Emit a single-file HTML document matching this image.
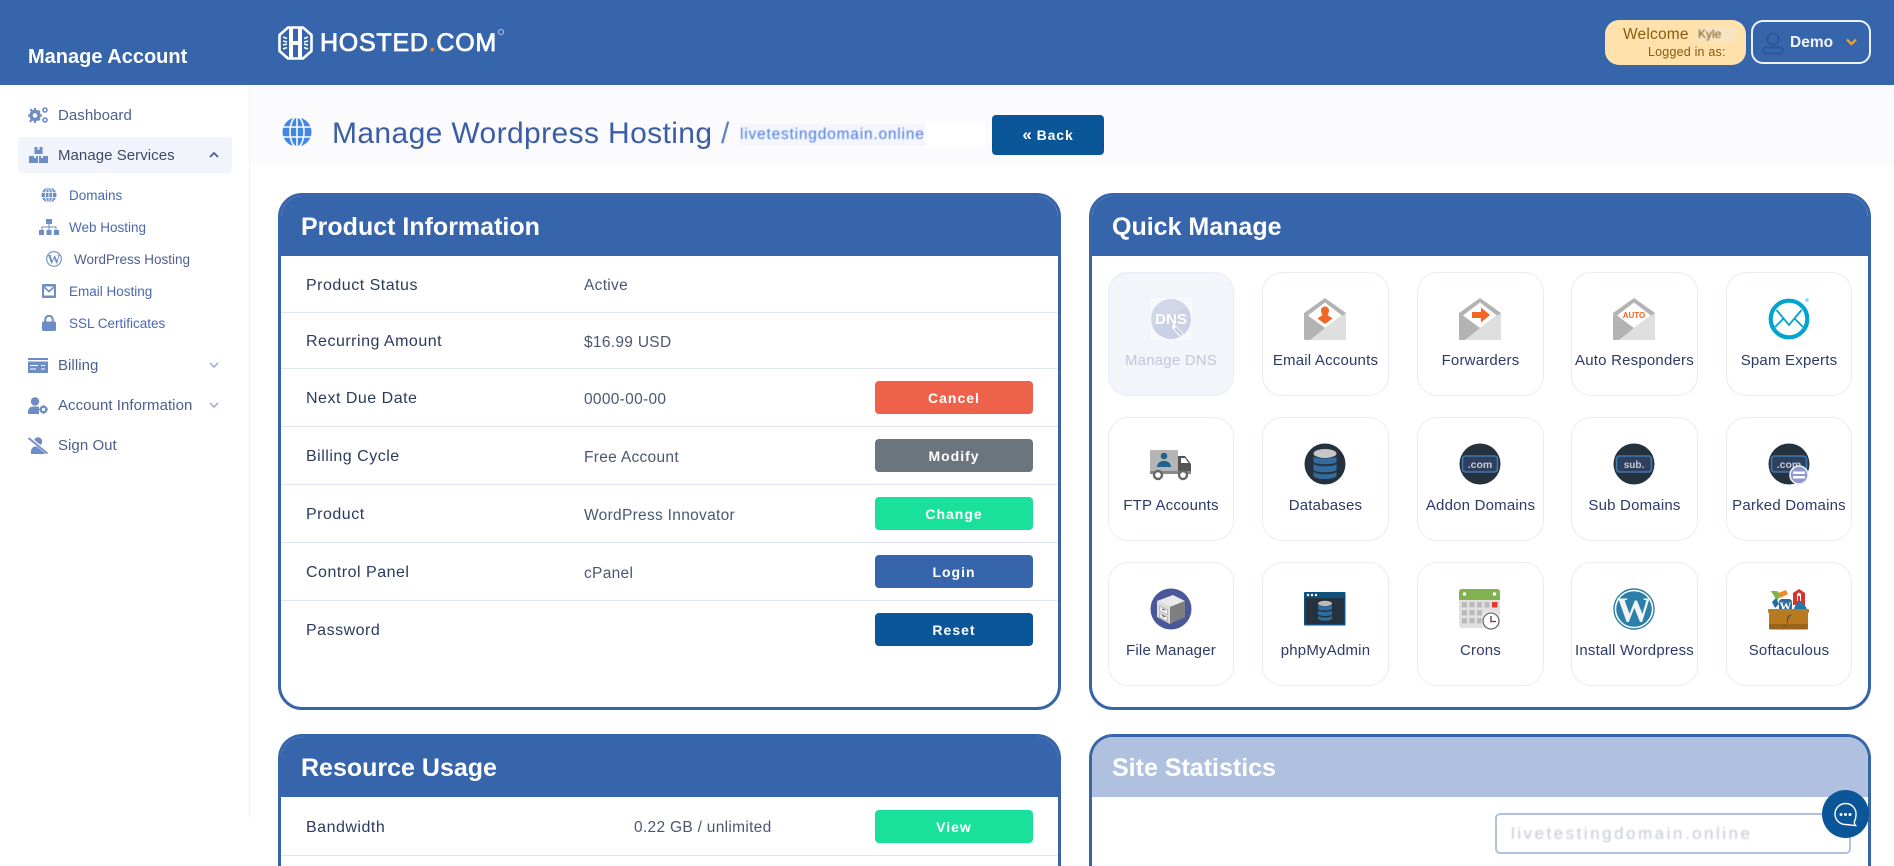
<!DOCTYPE html>
<html lang="en"><head><meta charset="utf-8"><title>Manage Wordpress Hosting</title>
<style>
*{box-sizing:border-box}
html,body{margin:0;padding:0;width:1894px;height:866px;overflow:hidden;background:#fff;font-family:"Liberation Sans",sans-serif}
#page{position:relative;width:1894px;height:866px;overflow:hidden;background:#fff}
.a{position:absolute;white-space:nowrap}
.top{position:absolute;left:0;top:0;width:1894px;height:85px;background:#3765ab}
.side-line{position:absolute;left:249px;top:85px;width:1px;height:732px;background:#f0f1f5}
.title-bar{position:absolute;left:250px;top:85px;width:1644px;height:80px;background:#fbfbfd}
.nav{position:absolute;height:20px;line-height:20px;font-size:15px;color:#4c5f8e;white-space:nowrap;letter-spacing:.05px;margin-top:1px}
.sub{position:absolute;height:20px;line-height:20px;font-size:13.5px;color:#4a68b0;white-space:nowrap;margin-top:1px}
.ni{position:absolute}
.card{position:absolute;border:3px solid #3765ab;border-radius:24px;background:#fff;overflow:hidden}
.card.cut{height:132px;border-bottom:0;border-radius:24px 24px 0 0}
.head{position:absolute;left:-3px;right:-3px;top:-3px;height:63px;background:#3765ab;color:#fff;font-weight:700;font-size:25px;line-height:68px;padding-left:23px}
.sep{position:absolute;left:0;right:0;height:1px;background:#dfe6f2}
.lb{position:absolute;left:25px;height:20px;line-height:20px;font-size:16px;color:#2b3a5e;white-space:nowrap;letter-spacing:.5px}
.val{position:absolute;left:303px;height:20px;line-height:20px;font-size:15.5px;color:#4b5772;white-space:nowrap;letter-spacing:.3px}
.btn{position:absolute;left:594px;width:158px;height:33px;border-radius:4px;color:#fff;text-align:center;font-weight:700;font-size:14px;line-height:34px;letter-spacing:1px}
.tile{position:absolute;width:126px;height:124px;border:1px solid #e8ecf6;border-radius:20px;background:#fff}
.tile svg{position:absolute;left:41px;top:25px;width:42px;height:42px;overflow:visible}
.tile span{position:absolute;left:-4px;right:-4px;top:78px;height:20px;line-height:20px;text-align:center;font-size:15px;color:#2b3a68;white-space:nowrap;letter-spacing:.2px}
</style></head><body>
<div id="page">

<div class="top"></div>
<div class="side-line"></div>
<div class="title-bar"></div>

<div class="a" style="left:28px;top:44px;height:26px;line-height:26px;font-size:20px;font-weight:700;color:#fff">Manage Account</div>

<svg class="a" style="left:278px;top:26px" width="35" height="34" viewBox="0 0 35 34">
<path d="M10 1.5H25L33.5 9V25L25 32.5H10L1.5 25V9Z" fill="none" stroke="#fff" stroke-width="2.6" stroke-linejoin="round"/>
<path d="M11 1.5H15V15H20V1.5H24V32.5H20V19H15V32.5H11Z" fill="#fff"/>
<path d="M5 11l4 1.5M5 15l4 1M5 19l4-1M5 23l4-1.5M30 11l-4 1.5M30 15l-4 1M30 19l-4-1M30 23l-4-1.5" stroke="#fff" stroke-width="1.5"/>
</svg>
<div class="a" style="left:320px;top:28px;height:30px;line-height:30px;font-size:25px;font-weight:400;color:#fff;letter-spacing:.75px;-webkit-text-stroke:.8px #fff">HOSTED<span style="color:#f58220;-webkit-text-stroke:.8px #f58220">.</span>COM</div>
<div class="a" style="left:498px;top:29px;width:6px;height:6px;border:1px solid #b8c8e2;border-radius:50%"></div>

<!-- Top right -->
<div class="a" style="left:1605px;top:20px;width:141px;height:45px;background:#ffe2ab;border-radius:14px"></div>
<div class="a" style="left:1623px;top:26px;height:18px;line-height:18px;font-size:15.5px;color:#8a5a0e;letter-spacing:.2px">Welcome</div>
<div class="a" style="left:1698px;top:27px;width:38px;height:15px;line-height:15px;font-size:12px;color:#7a5a20;background:#f6e4c4;filter:blur(.6px);overflow:hidden">Kyle</div>
<div class="a" style="left:1648px;top:44px;height:17px;line-height:17px;font-size:12.5px;color:#8a5a0e;letter-spacing:.2px">Logged in as:</div>
<div class="a" style="left:1751px;top:20px;width:120px;height:44px;border:2px solid #eef2fa;border-radius:12px"></div>
<svg class="a" style="left:1761px;top:31px" width="24" height="24" viewBox="0 0 24 24" fill="none" stroke="#2a5596" stroke-width="1.7"><circle cx="12" cy="8" r="5.7"/><rect x="2" y="16.5" width="20" height="6" rx="3"/></svg>
<div class="a" style="left:1790px;top:33px;height:20px;line-height:20px;font-size:15.5px;font-weight:700;color:#f1f4fb">Demo</div>
<svg class="a" style="left:1846px;top:38px" width="11" height="8" viewBox="0 0 11 8"><path d="M1 1.5L5.5 6L10 1.5" fill="none" stroke="#f5a623" stroke-width="2.2"/></svg>

<!-- Sidebar -->
<svg class="ni" style="left:28px;top:107px" width="20" height="16" viewBox="0 0 20 16" fill="#6d8dc4"><circle cx="7" cy="8.5" r="4" fill="none" stroke="#6d8dc4" stroke-width="3.4"/><path d="M6 1h2v3H6zM6 13h2v3H6zM0 7.5h3v2H0zM11 7.5h3v2h-3zM1.5 3l1.5-1.5 2 2-1.5 1.5zM9 12l1.5-1.5 2 2L11 14zM11 3l1.5 1.500-2 2L9 5zM3 12l1.5 1.5-2 2L1 14z"/><circle cx="17" cy="3" r="2" fill="none" stroke="#6d8dc4" stroke-width="1.6"/><circle cx="17" cy="13" r="2" fill="none" stroke="#6d8dc4" stroke-width="1.6"/></svg>
<div class="nav" style="left:58px;top:105px">Dashboard</div>

<div class="a" style="left:18px;top:137px;width:214px;height:36px;background:#f1f4fb;border-radius:3px"></div>
<svg class="ni" style="left:29px;top:147px" width="19" height="16" viewBox="0 0 19 16" fill="#6d8dc4"><path d="M5.5 0h3v3h2V0h3v7h-8z"/><path d="M0 9h5v2h2V9h2v7H0zM10 9h2v2h2V9h5v7h-9z"/></svg>
<div class="nav" style="left:58px;top:145px;color:#3c4a66">Manage Services</div>
<svg class="ni" style="left:209px;top:151px" width="10" height="8" viewBox="0 0 10 8"><path d="M1 6L5 2L9 6" fill="none" stroke="#4c5f8e" stroke-width="1.8"/></svg>

<svg class="ni" style="left:41px;top:187px" width="16" height="16" viewBox="0 0 16 16" fill="none"><circle cx="8" cy="8" r="7.5" fill="#6d8dc4"/><path d="M0 5.3h16M0 10.7h16M8 0v16" stroke="#fff" stroke-width=".9"/><ellipse cx="8" cy="8" rx="3.7" ry="7.6" stroke="#fff" stroke-width=".9"/></svg>
<div class="sub" style="left:69px;top:185px">Domains</div>

<svg class="ni" style="left:39px;top:219px" width="20" height="16" viewBox="0 0 20 16" fill="#6d8dc4"><rect x="7" y="0" width="6" height="5"/><rect x="0" y="11" width="5" height="5"/><rect x="7.5" y="11" width="5" height="5"/><rect x="15" y="11" width="5" height="5"/><path d="M9.5 5h1v2.5h7V11h-1V8.5h-6V11h-1V8.500h-6V11h-1V7.5h7z"/></svg>
<div class="sub" style="left:69px;top:217px">Web Hosting</div>

<svg class="ni" style="left:46px;top:251px" width="16" height="16" viewBox="0 0 16 16"><circle cx="8" cy="8" r="7.3" fill="none" stroke="#6d8dc4" stroke-width="1.1"/><text x="8" y="12.5" text-anchor="middle" font-family="'Liberation Serif',serif" font-weight="700" font-size="13" fill="#6d8dc4">W</text></svg>
<div class="sub" style="left:74px;top:249px;color:#4c5f8e">WordPress Hosting</div>

<svg class="ni" style="left:42px;top:284px" width="14" height="14" viewBox="0 0 14 14"><rect width="14" height="14" rx="1" fill="#6d8dc4"/><path d="M2 2.5H12V11.5H2Z" fill="#fff"/><path d="M2 3l5 4.5L12 3" fill="none" stroke="#6d8dc4" stroke-width="1.6"/></svg>
<div class="sub" style="left:69px;top:281px">Email Hosting</div>

<svg class="ni" style="left:42px;top:315px" width="14" height="16" viewBox="0 0 14 16"><path d="M3.3 7V4.5a3.7 3.7 0 0 1 7.4 0V7" fill="none" stroke="#6d8dc4" stroke-width="2"/><rect y="6.5" width="14" height="9.5" rx="1.5" fill="#6d8dc4"/></svg>
<div class="sub" style="left:69px;top:313px">SSL Certificates</div>

<svg class="ni" style="left:28px;top:358px" width="20" height="15" viewBox="0 0 20 15" fill="#6d8dc4"><rect width="20" height="2"/><path d="M0 3.5H20V15H0Z"/><path d="M2 7h8v1H2zM13 7h4v1h-4zM2 10.5h6v1H2zM13 10.5h4v1h-4z" fill="#fff"/></svg>
<div class="nav" style="left:58px;top:355px">Billing</div>
<svg class="ni" style="left:209px;top:361px" width="10" height="8" viewBox="0 0 10 8"><path d="M1 2L5 6L9 2" fill="none" stroke="#a9b4cc" stroke-width="1.8"/></svg>

<svg class="ni" style="left:28px;top:397px" width="20" height="17" viewBox="0 0 20 17" fill="#6d8dc4"><circle cx="7" cy="4.5" r="4.2"/><path d="M0 17v-2.5C0 11.5 2.5 9.5 5 9.5h4c1 0 1.5.3 2 .5v7z"/><circle cx="15.5" cy="12.5" r="2.8" fill="none" stroke="#6d8dc4" stroke-width="2.4"/><path d="M15 8h1v2h-1zM15 15h1v2h-1zM11 12h2v1h-2zM18 12h2v1h-2z"/></svg>
<div class="nav" style="left:58px;top:395px">Account Information</div>
<svg class="ni" style="left:209px;top:401px" width="10" height="8" viewBox="0 0 10 8"><path d="M1 2L5 6L9 2" fill="none" stroke="#a9b4cc" stroke-width="1.8"/></svg>

<svg class="ni" style="left:28px;top:437px" width="20" height="17" viewBox="0 0 20 17"><circle cx="10" cy="4.5" r="4.2" fill="#6d8dc4"/><path d="M3 17v-2.5C3 11.5 5 9.5 7.5 9.5h5c2.5 0 4.5 2 4.5 5V17z" fill="#6d8dc4"/><path d="M0.5 0.5L19 15.5" stroke="#fff" stroke-width="3.5"/><path d="M0.5 1L19.5 16.5" stroke="#6d8dc4" stroke-width="1.8"/></svg>
<div class="nav" style="left:58px;top:435px">Sign Out</div>

<!-- Title -->
<svg class="a" style="left:282px;top:117px" width="30" height="30" viewBox="0 0 30 30"><circle cx="15" cy="15" r="14.5" fill="#4287e6"/><g fill="none" stroke="#fbfbfd" stroke-width="1.6"><ellipse cx="15" cy="15" rx="7" ry="15"/><path d="M0 10h30M0 20h30M15 0v30"/></g></svg>
<div class="a" style="left:332px;top:114px;height:40px;line-height:40px;font-size:30px;color:#3b5da6;letter-spacing:.38px">Manage Wordpress Hosting</div>
<div class="a" style="left:721px;top:114px;height:40px;line-height:40px;font-size:30px;color:#5c82c8">/</div>
<div class="a" style="left:925px;top:123px;width:60px;height:24px;background:#fff"></div>
<div class="a" style="left:740px;top:124px;height:22px;line-height:22px;font-size:15.5px;color:#4e7ddc;letter-spacing:.8px;filter:blur(.6px);background:#f4f6fe">livetestingdomain.online</div>
<div class="a" style="left:992px;top:115px;width:112px;height:40px;background:#0a5699;border-radius:4px;color:#fff;text-align:center;font-weight:700;font-size:14px;line-height:40px;letter-spacing:.9px"><span style="font-size:17px;letter-spacing:0">«</span> Back</div>

<!-- Product Information -->
<div class="card" style="left:278px;top:193px;width:783px;height:517px">
<div class="head">Product Information</div>
<div class="lb" style="top:80px">Product Status</div><div class="val" style="top:80px">Active</div>
<div class="sep" style="top:116px"></div>
<div class="lb" style="top:136px">Recurring Amount</div><div class="val" style="top:137px">$16.99 USD</div>
<div class="sep" style="top:172px"></div>
<div class="lb" style="top:193px">Next Due Date</div><div class="val" style="top:194px">0000-00-00</div>
<div class="btn" style="top:185px;background:#ee614b">Cancel</div>
<div class="sep" style="top:230px"></div>
<div class="lb" style="top:251px">Billing Cycle</div><div class="val" style="top:252px">Free Account</div>
<div class="btn" style="top:243px;background:#6c757d">Modify</div>
<div class="sep" style="top:288px"></div>
<div class="lb" style="top:309px">Product</div><div class="val" style="top:310px">WordPress Innovator</div>
<div class="btn" style="top:301px;background:#19e19c">Change</div>
<div class="sep" style="top:346px"></div>
<div class="lb" style="top:367px">Control Panel</div><div class="val" style="top:368px">cPanel</div>
<div class="btn" style="top:359px;background:#3765ab">Login</div>
<div class="sep" style="top:404px"></div>
<div class="lb" style="top:425px">Password</div>
<div class="btn" style="top:417px;background:#0a5699">Reset</div>
</div>

<!-- Resource usage -->
<div class="card cut" style="left:278px;top:734px;width:783px">
<div class="head">Resource Usage</div>
<div class="lb" style="top:81px">Bandwidth</div>
<div class="val" style="top:81px;left:353px">0.22 GB / unlimited</div>
<div class="btn" style="top:73px;background:#19e19c">View</div>
<div class="sep" style="top:118px"></div>
</div>

<!-- Quick Manage -->
<div class="card" style="left:1089px;top:193px;width:782px;height:517px">
<div class="head">Quick Manage</div>
</div>

<!-- Row 1 -->
<div class="tile" style="left:1108px;top:272px;background:#f4f5fa">
<svg viewBox="0 0 42 42"><rect width="42" height="42" fill="#f8f9fc"/><circle cx="21" cy="21" r="20" fill="#d1d7e8"/><path d="M21 41A20 20 0 0 1 3 29L37 9A20 20 0 0 1 41 21 20 20 0 0 1 21 41" fill="#c4cbdf" opacity=".5"/><text x="21" y="26" text-anchor="middle" font-family="'Liberation Sans',sans-serif" font-weight="700" font-size="15" fill="#fff">DNS</text><path d="M23 25l11 11-3 4-9-10z" fill="#fff"/><path d="M26 29l7 7-2 2-7-7z" fill="#c4cbe6"/></svg>
<span style="color:#c0c7d8">Manage DNS</span></div>

<div class="tile" style="left:1262px;top:272px;width:127px">
<svg viewBox="0 0 42 42"><path d="M0 15L21 0 42 15V41a1 1 0 0 1-1 1H1a1 1 0 0 1-1-1Z" fill="#b3b3b3"/><path d="M21 4.5L38 17.5 21 30 4 17.5Z" fill="#fff"/><path d="M42 15V41a1 1 0 0 1-1 1H6L21 30Z" fill="#dfdfdf"/><path d="M21 8.5a4 4 0 0 1 4 4c0 2-1 3.5-1.5 4.5l5 3.5-7.5 5.5-7.5-5.5 5-3.5c-.5-1-1.5-2.5-1.5-4.5a4 4 0 0 1 4-4z" fill="#f26522"/></svg>
<span>Email Accounts</span></div>

<div class="tile" style="left:1417px;top:272px;width:127px">
<svg viewBox="0 0 42 42"><path d="M0 15L21 0 42 15V41a1 1 0 0 1-1 1H1a1 1 0 0 1-1-1Z" fill="#b3b3b3"/><path d="M21 4.5L38 17.5 21 30 4 17.5Z" fill="#fff"/><path d="M42 15V41a1 1 0 0 1-1 1H6L21 30Z" fill="#dfdfdf"/><path d="M13 14H22V9.5L31 17 22 24.5V20H13Z" fill="#f26522"/></svg>
<span>Forwarders</span></div>

<div class="tile" style="left:1571px;top:272px;width:127px">
<svg viewBox="0 0 42 42"><path d="M0 15L21 0 42 15V41a1 1 0 0 1-1 1H1a1 1 0 0 1-1-1Z" fill="#b3b3b3"/><path d="M21 4.5L38 17.5 21 30 4 17.5Z" fill="#fff"/><path d="M42 15V41a1 1 0 0 1-1 1H6L21 30Z" fill="#dfdfdf"/><text x="21" y="20" text-anchor="middle" font-family="'Liberation Sans',sans-serif" font-weight="700" font-size="8" fill="#f26522">AUTO</text></svg>
<span>Auto Responders</span></div>

<div class="tile" style="left:1726px;top:272px">
<svg viewBox="0 0 42 42"><circle cx="21" cy="21" r="18.3" fill="#fff" stroke="#00a4cf" stroke-width="4.2"/><path d="M8.5 12L21 27 33.5 12" fill="none" stroke="#00a4cf" stroke-width="1.8"/><path d="M7 29l8.5-8.5M35 29l-8.5-8.5" stroke="#00a4cf" stroke-width="1.8"/><circle cx="39" cy="2" r="1.8" fill="#8ed4ea"/></svg>
<span>Spam Experts</span></div>

<!-- Row 2 -->
<div class="tile" style="left:1108px;top:417px">
<svg viewBox="0 0 42 42"><rect x="0" y="7" width="28" height="22" rx="1" fill="#b5b5b5"/><circle cx="14" cy="13" r="3.3" fill="#21628f"/><path d="M7 24c0-4 3-5 5-6h4c2 1 5 2 5 6z" fill="#21628f"/><path d="M28 13h7l6 8v9H28z" fill="#555"/><path d="M31 15h4l3.5 5H31z" fill="#fff"/><rect x="0" y="28" width="41" height="3" fill="#888"/><circle cx="8" cy="32" r="4" fill="#fff" stroke="#666" stroke-width="2.4"/><circle cx="33" cy="32" r="4" fill="#fff" stroke="#666" stroke-width="2.4"/></svg>
<span>FTP Accounts</span></div>

<div class="tile" style="left:1262px;top:417px;width:127px">
<svg viewBox="0 0 42 42"><circle cx="21" cy="21" r="20.5" fill="#25323e"/><ellipse cx="21" cy="10.5" rx="11.5" ry="4.5" fill="#c7c7c7"/><path d="M9.5 13.5c2 2.5 21 2.5 23 0V19c-2 3-21 3-23 0z" fill="#336b9f"/><path d="M9.5 21c3 3 20 3 23 0v6c-3 3-20 3-23 0z" fill="#336b9f"/><path d="M9.5 29c3 3 20 3 23 0v4c-3 4-20 4-23 0z" fill="#336b9f"/></svg>
<span>Databases</span></div>

<div class="tile" style="left:1417px;top:417px;width:127px">
<svg viewBox="0 0 42 42"><circle cx="21" cy="21" r="20.5" fill="#25323e"/><rect x="3.5" y="13" width="35" height="16" rx="3" fill="#2f405e" stroke="#3f78ac" stroke-width="1.6"/><text x="21" y="25" text-anchor="middle" font-family="'Liberation Sans',sans-serif" font-weight="700" font-size="10.5" fill="#c6ccd4">.com</text></svg>
<span>Addon Domains</span></div>

<div class="tile" style="left:1571px;top:417px;width:127px">
<svg viewBox="0 0 42 42"><circle cx="21" cy="21" r="20.5" fill="#25323e"/><rect x="3.5" y="13" width="35" height="16" rx="3" fill="#2f405e" stroke="#3f78ac" stroke-width="1.6"/><text x="21" y="25" text-anchor="middle" font-family="'Liberation Sans',sans-serif" font-weight="700" font-size="10" fill="#c6ccd4">sub.</text></svg>
<span>Sub Domains</span></div>

<div class="tile" style="left:1726px;top:417px">
<svg viewBox="0 0 42 42"><circle cx="21" cy="21" r="20.5" fill="#25323e"/><rect x="3.5" y="13" width="35" height="16" rx="3" fill="#2f405e" stroke="#3f78ac" stroke-width="1.6"/><text x="21" y="25" text-anchor="middle" font-family="'Liberation Sans',sans-serif" font-weight="700" font-size="10.5" fill="#c6ccd4">.com</text><circle cx="31" cy="32" r="9" fill="#8f98cc" stroke="#eef0fa" stroke-width="1.6"/><rect x="25" y="28.5" width="12" height="2.5" fill="#fff"/><rect x="25" y="33" width="12" height="2.5" fill="#fff"/></svg>
<span>Parked Domains</span></div>

<!-- Row 3 -->
<div class="tile" style="left:1108px;top:562px">
<svg viewBox="0 0 42 42"><circle cx="21" cy="21" r="20.5" fill="#4a5899"/><path d="M7 13L23 7 35 13 20 19Z" fill="#eaeaea"/><path d="M7 13L20 19V36L7 29Z" fill="#ddd"/><path d="M20 19L35 13V29L20 36Z" fill="#7f7f7f"/><path d="M9.5 18l8 3.7v5L9.5 23zM9.5 25.5l8 3.7v4l-8-3.7z" fill="#f2f2f2" stroke="#999" stroke-width=".6"/><path d="M12 21l3 1.3M12 27.5l3 1.3" stroke="#555" stroke-width="1"/></svg>
<span>File Manager</span></div>

<div class="tile" style="left:1262px;top:562px;width:127px">
<svg viewBox="0 0 42 42"><rect x="0" y="4" width="41.5" height="33.5" rx="1" fill="#10507c"/><rect x="1.5" y="10" width="38.5" height="26" fill="#25323e"/><circle cx="4" cy="7" r="1.2" fill="#fff"/><circle cx="8" cy="7" r="1.2" fill="#fff"/><circle cx="12" cy="7" r="1.2" fill="#fff"/><ellipse cx="21" cy="15.5" rx="7" ry="2.7" fill="#bbb"/><path d="M14 17c2 2 12 2 14 0v4c-2 2-12 2-14 0z" fill="#2d6ea1"/><path d="M14 22.5c2 2 12 2 14 0v4c-2 2-12 2-14 0z" fill="#2d6ea1"/><path d="M14 28c2 2 12 2 14 0v2.5c-2 3-12 3-14 0z" fill="#2d6ea1"/></svg>
<span>phpMyAdmin</span></div>

<div class="tile" style="left:1417px;top:562px;width:127px">
<svg viewBox="0 0 42 42"><rect x="0" y="1" width="41" height="39" rx="3" fill="#e0e0e0"/><path d="M0 12V4a3 3 0 0 1 3-3h35a3 3 0 0 1 3 3v8z" fill="#82b151"/><circle cx="5.5" cy="6" r="1.7" fill="#fff"/><circle cx="35.5" cy="6" r="1.7" fill="#fff"/><g fill="#bababa"><rect x="3" y="14" width="5" height="5.5"/><rect x="10.5" y="14" width="5" height="5.5"/><rect x="18" y="14" width="5" height="5.5"/><rect x="25.5" y="14" width="5" height="5.5"/><rect x="3" y="22" width="5" height="5.5"/><rect x="10.5" y="22" width="5" height="5.5"/><rect x="18" y="22" width="5" height="5.5"/><rect x="3" y="30" width="5" height="5.5"/><rect x="10.5" y="30" width="5" height="5.5"/><rect x="18" y="30" width="5" height="5.5"/></g><rect x="33" y="14" width="5.5" height="5.5" fill="#e03a2e"/><circle cx="32" cy="33" r="9.5" fill="#fff"/><circle cx="32" cy="33" r="8" fill="#fff" stroke="#666" stroke-width="1.3"/><path d="M32 28v5.5h5" fill="none" stroke="#444" stroke-width="1.3"/><circle cx="32" cy="33.5" r="1" fill="#d33"/></svg>
<span>Crons</span></div>

<div class="tile" style="left:1571px;top:562px;width:127px">
<svg viewBox="0 0 42 42"><circle cx="21" cy="21" r="20" fill="#fff" stroke="#2f7fa8" stroke-width="1.4"/><circle cx="21" cy="21" r="17.8" fill="#2a80a8"/><text x="21" y="33.5" text-anchor="middle" font-family="'Liberation Serif',serif" font-weight="700" font-size="35" fill="#f2f2f2">W</text></svg>
<span>Install Wordpress</span></div>

<div class="tile" style="left:1726px;top:562px">
<svg viewBox="0 0 42 42"><path d="M3 3h6l4 4-4 6z" fill="#7ab648"/><path d="M10 5l8-3 2 4-8 4z" fill="#f08a24"/><path d="M4 14l4-4 3 6-4 4z" fill="#1b6fa8"/><rect x="11" y="11" width="13" height="13" rx="3" fill="#2f6e9c"/><text x="17.5" y="22" text-anchor="middle" font-family="'Liberation Serif',serif" font-weight="700" font-size="12" fill="#fff">W</text><path d="M25 5L31 1l6 4v12H25z" fill="#d9342b"/><path d="M29 6l2-1.5L33 6v7h-1V8h-2v5h-1z" fill="#fff"/><path d="M26 21c1-5 5-7 7-8 0 2 5 3 6 9z" fill="#1f78ac"/><rect x="0" y="21" width="41" height="4" rx="1" fill="#b47a28"/><path d="M1 25H40V40a1.5 1.5 0 0 1-1.5 1.5H2.5A1.5 1.5 0 0 1 1 40Z" fill="#b97a1f"/><path d="M1 36H40V40a1.5 1.5 0 0 1-1.5 1.5H2.5A1.5 1.5 0 0 1 1 40Z" fill="#9a6418"/><path d="M24 27c-3-1-5 2-5 5 0 2 .5 4-1 6-1 1-3 0-3-1 2 2 4 .5 4.5-2 .5-3 .5-6 3-7.5z" fill="#1e4a7a"/></svg>
<span>Softaculous</span></div>

<!-- Site statistics -->
<div class="card cut" style="left:1089px;top:734px;width:782px">
<div class="head" style="background:#b0c1df;top:0;height:60px;line-height:62px">Site Statistics</div>
</div>
<div class="a" style="left:1495px;top:813px;width:356px;height:41px;border:2px solid #b0c1df;border-radius:5px;background:#fff"></div>
<div class="a" style="left:1511px;top:823px;height:22px;line-height:22px;font-size:17px;color:#c4c8d4;letter-spacing:2.5px;filter:blur(.8px)">livetestingdomain.online</div>

<!-- Chat -->
<div class="a" style="left:1822px;top:790px;width:47px;height:48px;border-radius:50%;background:#0a5699"></div>
<svg class="a" style="left:1833px;top:802px" width="25" height="25" viewBox="0 0 25 25"><path d="M12.5 1.5a10.5 10.5 0 1 0 0 21c2.5 0 7 1 10 1-1-1-1.5-2-1-4 1-2 1.500-3.500 1.500-6.500a10.500 10.500 0 0 0-10.500-11.500z" fill="none" stroke="#fff" stroke-width="1.4"/><circle cx="8" cy="12.5" r="1.5" fill="#fff"/><circle cx="12.5" cy="12.5" r="1.5" fill="#fff"/><circle cx="17" cy="12.5" r="1.5" fill="#fff"/></svg>

</div>
</body></html>
